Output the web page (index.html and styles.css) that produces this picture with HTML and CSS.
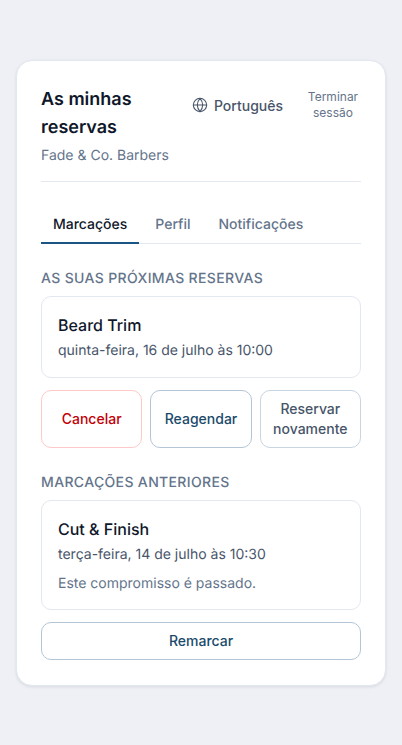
FILE: index.html
```html
<!DOCTYPE html>
<html lang="pt">
<head>
<meta charset="utf-8">
<title>As minhas reservas</title>
<link rel="stylesheet" href="styles.css">
</head>
<body>
<main class="card">
  <header class="head">
    <div class="head-title">
      <h1>As minhas reservas</h1>
      <p class="shop">Fade &amp; Co. Barbers</p>
    </div>
    <div class="head-actions">
      <button class="lang">
        <svg class="globe" viewBox="0 0 24 24" fill="none" stroke="currentColor" stroke-linecap="round" stroke-linejoin="round"><circle cx="12" cy="12" r="10"/><path d="M2 12h20"/><path d="M12 2a15.3 15.3 0 0 1 4 10 15.3 15.3 0 0 1-4 10 15.3 15.3 0 0 1-4-10 15.3 15.3 0 0 1 4-10z"/></svg>
        <span>Português</span>
      </button>
      <button class="logout">Terminar sessão</button>
    </div>
  </header>
  <nav class="tabs">
    <a class="tab active">Marcações</a>
    <a class="tab">Perfil</a>
    <a class="tab">Notificações</a>
  </nav>
  <h2 class="label">AS SUAS PRÓXIMAS RESERVAS</h2>
  <section class="booking">
    <h3>Beard Trim</h3>
    <p class="when">quinta-feira, 16 de julho às 10:00</p>
  </section>
  <div class="actions">
    <button class="btn danger">Cancelar</button>
    <button class="btn primary">Reagendar</button>
    <button class="btn neutral">Reservar novamente</button>
  </div>
  <h2 class="label">MARCAÇÕES ANTERIORES</h2>
  <section class="booking">
    <h3>Cut &amp; Finish</h3>
    <p class="when">terça-feira, 14 de julho às 10:30</p>
    <p class="note">Este compromisso é passado.</p>
  </section>
  <button class="btn primary wide">Remarcar</button>
</main>
</body>
</html>
```
FILE: styles.css
```css
* { box-sizing: border-box; }
html, body { margin: 0; height: 100%; }
body {
  background: #eef0f5;
  font-family: Inter, "Liberation Sans", sans-serif;
  padding: 60px 16px 0;
  color: #0f172a;
  text-rendering: geometricPrecision;
  -webkit-font-smoothing: antialiased;
}
button { font-family: inherit; background: #fff; cursor: pointer; }
.card {
  background: #fff;
  border: 1px solid #e2e8f0;
  border-radius: 16px;
  padding: 24px;
  height: 626px;
  box-shadow: 0 1px 3px rgba(15, 23, 42, 0.1);
}
.head {
  display: flex;
  align-items: flex-start;
  gap: 12px;
  padding-bottom: 16px;
  border-bottom: 1px solid #e2e8f0;
}
.head-title { flex: 1; min-width: 0; padding-top: 1px; margin-bottom: -1px; }
h1 {
  margin: 0;
  font-size: 18px;
  line-height: 28px;
  font-weight: 600;
  color: #0f172a;
}
.shop {
  margin: 4px 0 0;
  font-size: 14px;
  line-height: 20px;
  color: #64748b;
}
.head-actions { display: flex; align-items: flex-start; gap: 22px; }
.lang {
  display: flex;
  align-items: center;
  gap: 6px;
  border: 0;
  padding: 0;
  height: 24px;
  margin-top: 8px;
  font-size: 14px;
  font-weight: 500;
  color: #475569;
}
.globe { width: 16px; height: 16px; flex: none; stroke-width: 1.6; }
.logout {
  border: 0;
  padding: 0;
  width: 56px;
  margin-top: 4px;
  font-size: 12px;
  line-height: 16px;
  color: #64748b;
  text-align: center;
}
.tabs {
  display: flex;
  gap: 4px;
  margin-top: 24px;
  border-bottom: 1px solid #e2e8f0;
}
.tab {
  padding: 9px 12px 7px;
  height: 38px;
  font-size: 14px;
  line-height: 20px;
  font-weight: 500;
  color: #64748b;
  margin-bottom: -1px;
  border-bottom: 2px solid transparent;
}
.tab.active { color: #0f172a; border-bottom-color: #1a5585; }
.label {
  margin: 25px 0 7px;
  font-size: 14px;
  line-height: 20px;
  font-weight: 500;
  letter-spacing: 0.35px;
  color: #64748b;
}
.booking {
  border: 1px solid #e2e8f0;
  border-radius: 10px;
  padding: 16px;
  background: #fff;
}
h3 {
  margin: 0;
  font-size: 16px;
  line-height: 24px;
  font-weight: 500;
  color: #0f172a;
}
.when {
  margin: 4px 0 0;
  font-size: 14px;
  line-height: 20px;
  color: #475569;
}
.note {
  margin: 9px 0 -1px;
  font-size: 14px;
  line-height: 20px;
  color: #64748b;
}
.actions {
  display: grid;
  grid-template-columns: 1fr 1fr 1fr;
  gap: 8px;
  margin-top: 12px;
}
.btn {
  border: 1px solid #b4c6d6;
  border-radius: 10px;
  font-size: 14px;
  line-height: 20px;
  font-weight: 500;
  padding: 8px 12px;
  min-height: 38px;
}
.danger { color: #c10007; border-color: #ffc9c9; }
.primary { color: #1a4a6b; }
.neutral { color: #475569; padding: 8px 10px; border-color: #c8d5e2; }
.wide { display: block; width: 100%; margin-top: 12px; }
```
